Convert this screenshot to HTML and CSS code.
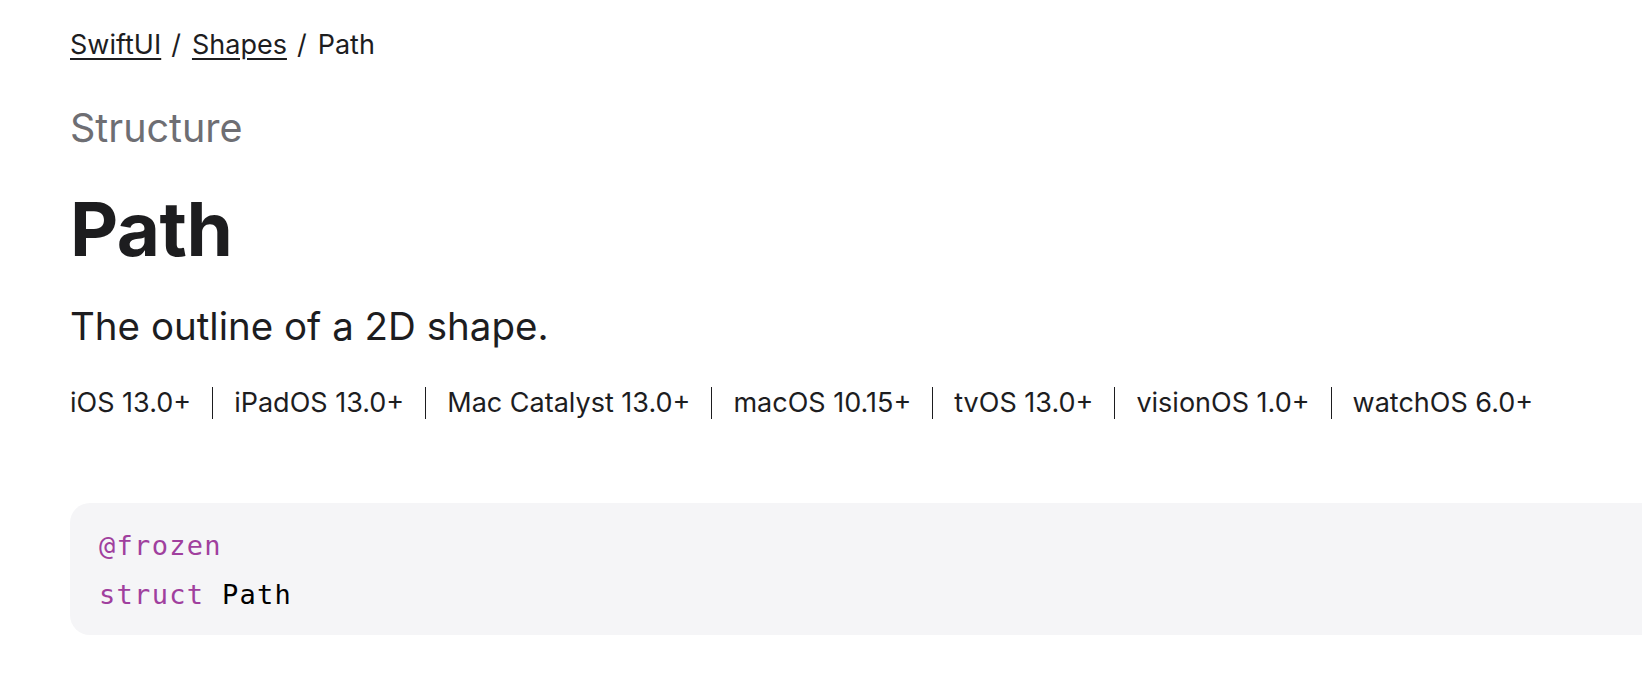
FILE: index.html
```html
<!DOCTYPE html>
<html lang="en">
<head>
<meta charset="utf-8">
<title>Path | Apple Developer Documentation</title>
<link rel="stylesheet" href="styles.css">
</head>
<body>
<main class="page">
  <nav class="breadcrumbs">
    <a class="crumb-link" href="#">SwiftUI</a><span class="crumb-sep">/</span><a class="crumb-link" href="#">Shapes</a><span class="crumb-sep">/</span><span class="crumb-current">Path</span>
  </nav>
  <div class="eyebrow">Structure</div>
  <h1 class="title">Path</h1>
  <p class="abstract">The outline of a 2D shape.</p>
  <ul class="platforms">
    <li class="platform">iOS 13.0+</li>
    <li class="platform">iPadOS 13.0+</li>
    <li class="platform">Mac Catalyst 13.0+</li>
    <li class="platform">macOS 10.15+</li>
    <li class="platform">tvOS 13.0+</li>
    <li class="platform">visionOS 1.0+</li>
    <li class="platform">watchOS 6.0+</li>
  </ul>
  <pre class="declaration"><code><span class="kw">@frozen</span>
<span class="kw">struct</span> <span class="ident">Path</span></code></pre>
</main>
</body>
</html>
```

FILE: styles.css
```css
html, body {
  margin: 0;
  padding: 0;
  background: #ffffff;
  overflow: hidden;
}

body {
  font-family: Inter, "Noto Sans", sans-serif;
  color: #1d1d1f;
}

.page {
  padding: 29px 0 0 70px;
  display: flex;
  flex-direction: column;
  align-items: flex-start;
}

.breadcrumbs {
  font-size: 27px;
  line-height: 32px;
  color: #1d1d1f;
  display: flex;
  align-items: baseline;
}

.crumb-link {
  color: #1d1d1f;
  text-decoration: underline;
  text-decoration-thickness: 1.5px;
  text-underline-offset: 4px;
}

.crumb-sep {
  margin: 0 11px 0 10px;
}

.eyebrow {
  margin-top: 44px;
  font-size: 39.5px;
  line-height: 47px;
  color: #6e6e73;
}

.title {
  margin: 37px 0 0;
  font-size: 74.5px;
  line-height: 80px;
  font-weight: 700;
  letter-spacing: -0.5px;
}

.abstract {
  margin: 34px 0 0;
  font-size: 38.5px;
  line-height: 46px;
}

.platforms {
  list-style: none;
  margin: 38px 0 0;
  padding: 0;
  display: flex;
  font-size: 27px;
  line-height: 32px;
}

.platform + .platform {
  border-left: 1.5px solid #1d1d1f;
  margin-left: 21px;
  padding-left: 21px;
}

.declaration {
  margin: 84px 0 0;
  align-self: stretch;
  margin-right: -60px;
  background: #f5f5f7;
  border-radius: 20px;
  padding: 18px 29px 16px;
  font-family: "DejaVu Sans Mono", "Liberation Mono", monospace;
  font-size: 27px;
  line-height: 49px;
  letter-spacing: 1.3px;
  color: #000000;
}

.kw {
  color: #a03f9e;
}
```
